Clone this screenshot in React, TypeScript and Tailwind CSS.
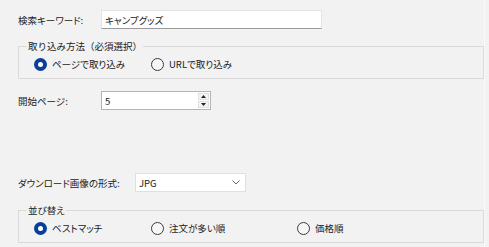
import React from "react";

function Radio({ checked, label, className = "" }: { checked?: boolean; label: string; className?: string }) {
  return (
    <div className={`flex items-center h-[14px] ${className}`}>
      {checked ? (
        <span className="w-[13px] h-[13px] rounded-full bg-[#0a3f98] flex items-center justify-center shrink-0">
          <span className="w-[5px] h-[5px] rounded-full bg-white" />
        </span>
      ) : (
        <span className="w-[13px] h-[13px] rounded-full border border-[#3a3a3a] bg-[#f6f6f6] shrink-0" />
      )}
      <span className="ml-[5px] whitespace-nowrap">{label}</span>
    </div>
  );
}

export default function App() {
  return (
    <div
      className="w-[489px] h-[247px] bg-[#f2f2f2] overflow-hidden text-[9.5px] leading-[14px] text-[#1a1a1a] flex"
      style={{ fontFamily: '"Noto Sans CJK JP", "Noto Sans", sans-serif', fontFeatureSettings: '"palt"' }}
    >
      <div className="w-[485px] flex flex-col pt-[10px] border-r border-[#f8f8f8]">
        {/* keyword */}
        <div className="flex items-center h-[19px]">
          <span className="pl-[18px] w-[101px] whitespace-nowrap">検索キーワード:</span>
          <div className="w-[221px] h-[19px] bg-white border border-[#e4e4e4] border-b-[#9a9a9a] flex items-center pl-[3px]">
            キャンプグッズ
          </div>
        </div>

        {/* group 1 */}
        <fieldset className="ml-[18px] w-[466px] mt-[10px] border border-[#dadada] pl-[8px] pt-[4px] pb-[7px]">
          <legend className="px-[1px] whitespace-nowrap [font-feature-settings:normal]">取り込み方法（必須選択）</legend>
          <div className="flex items-center pl-[7px]">
            <Radio checked label="ページで取り込み" className="w-[117px]" />
            <Radio label="URLで取り込み" />
          </div>
        </fieldset>

        {/* start page */}
        <div className="flex items-center h-[19px] mt-[12px]">
          <span className="pl-[18px] w-[101px] whitespace-nowrap">開始ページ:</span>
          <div className="w-[110px] h-[19px] bg-white border border-[#b4b4b4] flex items-center justify-between pl-[3px] pr-[1px]">
            <span>5</span>
            <div className="flex flex-col h-[15px] w-[11px] justify-between">
              <div className="h-[7px] flex items-center justify-center bg-[#f4f4f4] border border-[#e0e0e0]">
                <svg width="5" height="3" viewBox="0 0 5 3"><path d="M0 3 L2.5 0 L5 3 Z" fill="#222" /></svg>
              </div>
              <div className="h-[7px] flex items-center justify-center bg-[#f4f4f4] border border-[#e0e0e0]">
                <svg width="5" height="3" viewBox="0 0 5 3"><path d="M0 0 L2.5 3 L5 0 Z" fill="#222" /></svg>
              </div>
            </div>
          </div>
        </div>

        {/* format */}
        <div className="flex items-center h-[19px] mt-[63px]">
          <span className="pl-[18px] w-[135px] whitespace-nowrap">ダウンロード画像の形式:</span>
          <div className="w-[111px] h-[19px] bg-white border border-[#e0e0e0] flex items-center justify-between pl-[3px] pr-[5px]">
            <span>JPG</span>
            <svg width="8" height="5" viewBox="0 0 8 5"><path d="M0.5 0.5 L4 4 L7.5 0.5" fill="none" stroke="#666" strokeWidth="1" /></svg>
          </div>
        </div>

        {/* group 2 */}
        <fieldset className="ml-[18px] w-[466px] mt-[11px] border border-[#dadada] pl-[8px] pt-[4px] pb-[7px]">
          <legend className="px-[1px] whitespace-nowrap">並び替え</legend>
          <div className="flex items-center pl-[7px]">
            <Radio checked label="ベストマッチ" className="w-[117px]" />
            <Radio label="注文が多い順" className="w-[146px]" />
            <Radio label="価格順" />
          </div>
        </fieldset>
      </div>
    </div>
  );
}
